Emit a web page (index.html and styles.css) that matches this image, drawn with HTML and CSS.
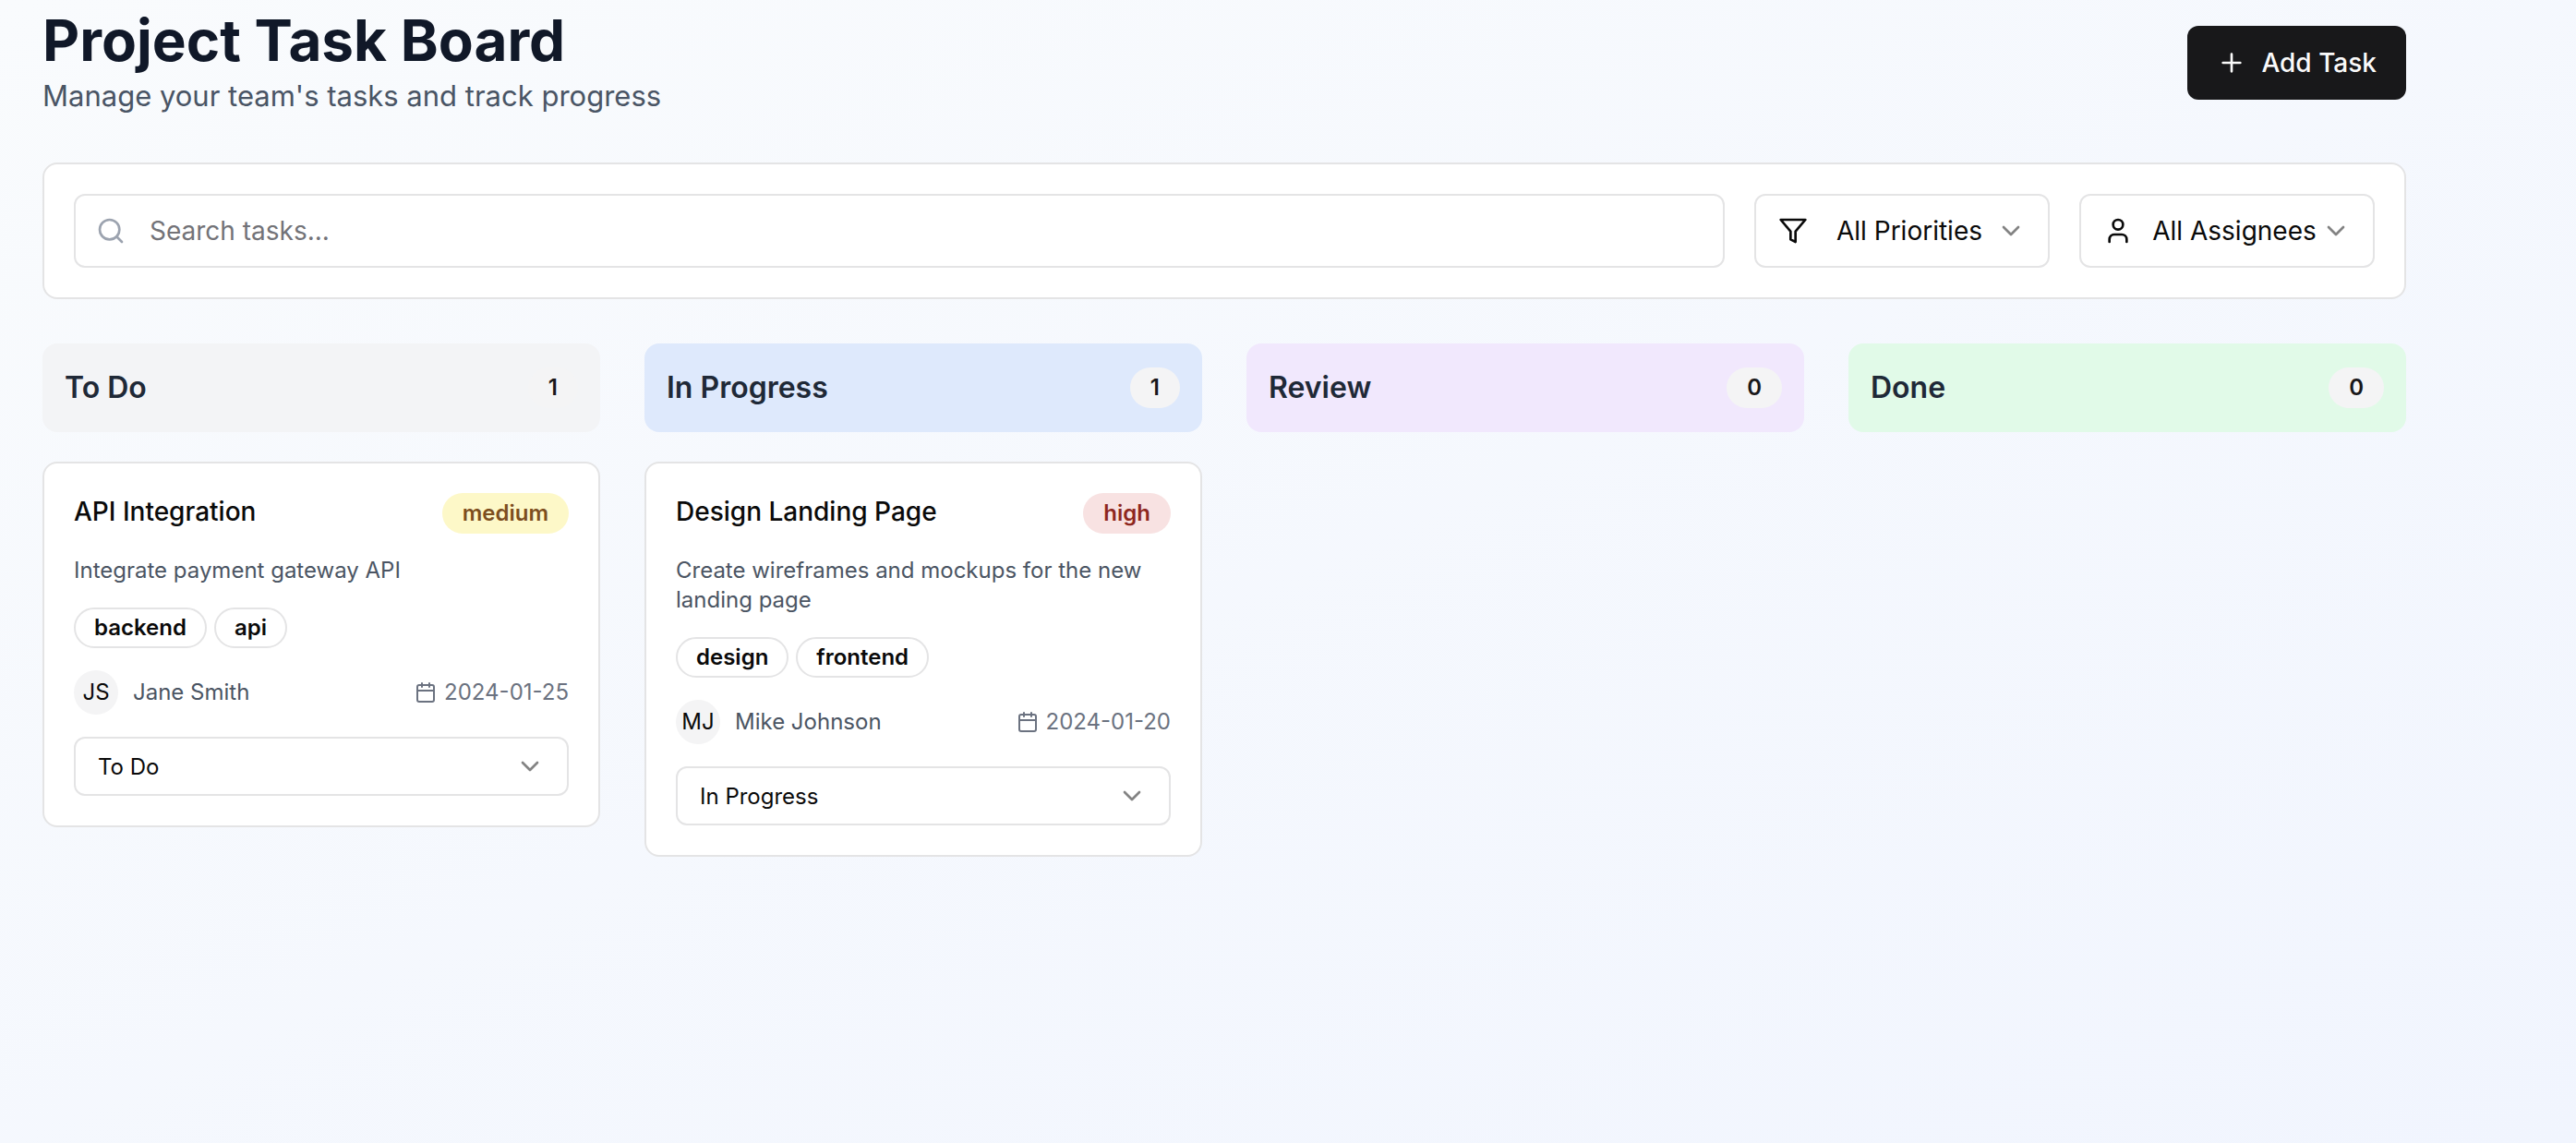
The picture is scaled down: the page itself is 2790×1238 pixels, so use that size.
FILE: index.html
```html
<!DOCTYPE html>
<html lang="en">
  <head>
    <meta charset="UTF-8" />
    <meta name="viewport" content="width=device-width, initial-scale=1.0" />
    <title>Project Task Board</title>
    <link rel="stylesheet" href="styles.css">
  </head>
  <body>
    <div class="container">
      <header class="page-header">
        <div>
          <h1>Project Task Board</h1>
          <p class="subtitle">Manage your team's tasks and track progress</p>
        </div>
        <button class="add-btn" type="button">
          <svg class="icon" viewBox="0 0 24 24"><path d="M5 12h14M12 5v14" /></svg>
          Add Task
        </button>
      </header>

      <div class="filters">
        <label class="search">
          <svg class="icon" viewBox="0 0 24 24"><circle cx="11" cy="11" r="8" /><path d="m21 21-4.3-4.3" /></svg>
          <input type="text" aria-label="Search tasks" placeholder="Search tasks..." />
        </label>
        <label class="filter">
          <svg class="icon" viewBox="0 0 24 24"><path d="M22 3H2l8 9.46V19l4 2v-8.54L22 3z" /></svg>
          <select aria-label="Priority">
            <option>All Priorities</option>
            <option>High</option>
            <option>Medium</option>
            <option>Low</option>
          </select>
          <svg class="icon chevron" viewBox="0 0 24 24"><path d="m6 9 6 6 6-6" /></svg>
        </label>
        <label class="filter">
          <svg class="icon" viewBox="0 0 24 24"><path d="M19 21v-2a4 4 0 0 0-4-4H9a4 4 0 0 0-4 4v2" /><circle cx="12" cy="7" r="4" /></svg>
          <select aria-label="Assignee">
            <option>All Assignees</option>
            <option>Jane Smith</option>
            <option>Mike Johnson</option>
          </select>
          <svg class="icon chevron" viewBox="0 0 24 24"><path d="m6 9 6 6 6-6" /></svg>
        </label>
      </div>

      <main class="board">
        <section class="column">
          <div class="column-header todo">
            <h2>To Do</h2>
            <span class="badge count">1</span>
          </div>
          <article class="card">
            <div class="card-top">
              <h3>API Integration</h3>
              <span class="badge medium">medium</span>
            </div>
            <p class="description">Integrate payment gateway API</p>
            <div class="tags">
              <span class="badge tag">backend</span>
              <span class="badge tag">api</span>
            </div>
            <div class="meta">
              <span class="avatar">JS</span>
              <span class="name">Jane Smith</span>
              <svg class="icon small" viewBox="0 0 24 24"><path d="M8 2v4M16 2v4M3 10h18" /><rect x="3" y="4" width="18" height="18" rx="2" /></svg>
              <time datetime="2024-01-25">2024-01-25</time>
            </div>
            <label class="status">
              <select aria-label="Status of API Integration">
                <option selected>To Do</option>
                <option>In Progress</option>
                <option>Review</option>
                <option>Done</option>
              </select>
              <svg class="icon chevron" viewBox="0 0 24 24"><path d="m6 9 6 6 6-6" /></svg>
            </label>
          </article>
        </section>

        <section class="column">
          <div class="column-header progress">
            <h2>In Progress</h2>
            <span class="badge count">1</span>
          </div>
          <article class="card">
            <div class="card-top">
              <h3>Design Landing Page</h3>
              <span class="badge high">high</span>
            </div>
            <p class="description">Create wireframes and mockups for the new landing page</p>
            <div class="tags">
              <span class="badge tag">design</span>
              <span class="badge tag">frontend</span>
            </div>
            <div class="meta">
              <span class="avatar">MJ</span>
              <span class="name">Mike Johnson</span>
              <svg class="icon small" viewBox="0 0 24 24"><path d="M8 2v4M16 2v4M3 10h18" /><rect x="3" y="4" width="18" height="18" rx="2" /></svg>
              <time datetime="2024-01-20">2024-01-20</time>
            </div>
            <label class="status">
              <select aria-label="Status of Design Landing Page">
                <option>To Do</option>
                <option selected>In Progress</option>
                <option>Review</option>
                <option>Done</option>
              </select>
              <svg class="icon chevron" viewBox="0 0 24 24"><path d="m6 9 6 6 6-6" /></svg>
            </label>
          </article>
        </section>

        <section class="column">
          <div class="column-header review">
            <h2>Review</h2>
            <span class="badge count">0</span>
          </div>
        </section>

        <section class="column">
          <div class="column-header done">
            <h2>Done</h2>
            <span class="badge count">0</span>
          </div>
        </section>
      </main>
    </div>
  </body>
</html>
```
FILE: styles.css
```css
* {
  box-sizing: border-box;
}
body {
  font-family: Inter, "Liberation Sans", sans-serif;
  font-size: 28px;
  color: #0a0a0a;
  margin: 0;
  min-height: 100vh;
  background: linear-gradient(to bottom right, #f9fbfd, #f1f5fe);
}
h1, h2, h3, p {
  margin: 0;
}
input, select, button {
  font: inherit;
  color: inherit;
  border: none;
  background: none;
  padding: 0;
  outline: none;
}
select {
  appearance: none;
  field-sizing: content;
  cursor: pointer;
}
.icon {
  width: 32px;
  height: 32px;
  flex: none;
  fill: none;
  stroke: currentColor;
  stroke-width: 2;
  stroke-linecap: round;
  stroke-linejoin: round;
}
.icon.small {
  width: 24px;
  height: 24px;
}
.chevron {
  opacity: 0.5;
}
.container {
  max-width: 2606px;
  padding: 8px 0 48px 46px;
}

/* header */
.page-header {
  display: flex;
  justify-content: space-between;
  align-items: center;
  margin-bottom: 48px;
}
h1 {
  font-size: 62px;
  line-height: 72px;
  font-weight: 700;
  color: #101828;
}
.subtitle {
  font-size: 31px;
  line-height: 48px;
  color: #4a5565;
}
.add-btn {
  display: flex;
  align-items: center;
  gap: 16px;
  height: 80px;
  padding: 0 32px;
  border-radius: 12px;
  background-color: #18181a;
  color: #fafafa;
  font-weight: 500;
  cursor: pointer;
}

/* filters */
.filters {
  display: flex;
  gap: 32px;
  padding: 32px;
  margin-bottom: 48px;
  background-color: white;
  border: 2px solid #e4e4e5;
  border-radius: 16px;
}
.search, .filter {
  display: flex;
  align-items: center;
  height: 80px;
  padding: 0 24px;
  border: 2px solid #e4e4e5;
  border-radius: 12px;
}
.search {
  flex: 1;
  gap: 26px;
  padding: 0 22px;
}
.search .icon {
  color: #9ca3af;
}
.search input {
  flex: 1;
}
.search input::placeholder {
  color: #737378;
  opacity: 1;
}
.filter {
  width: 320px;
  justify-content: space-between;
}
.filter .icon:first-child {
  margin-right: 16px;
}

/* board */
.board {
  display: grid;
  grid-template-columns: repeat(4, 1fr);
  gap: 48px;
}
.column-header {
  display: flex;
  justify-content: space-between;
  align-items: center;
  padding: 24px;
  margin-bottom: 32px;
  border-radius: 16px;
}
.column-header h2 {
  font-size: 32px;
  line-height: 48px;
  font-weight: 600;
  color: #1f2937;
}
.todo {
  background-color: #f3f4f6;
}
.progress {
  background-color: #dee9fc;
}
.review {
  background-color: #f1e8fd;
}
.done {
  background-color: #e1fae8;
}
.badge {
  font-size: 24px;
  line-height: 32px;
  font-weight: 600;
  padding: 4px 20px;
  border: 2px solid transparent;
  border-radius: 22px;
}
.count {
  background-color: #f4f4f5;
  color: #18181a;
}
.medium {
  background-color: #fdf8c8;
  color: #7d4e1e;
}
.high {
  background-color: #f8e2e2;
  color: #8e2720;
}
.tag {
  border-color: #e4e4e5;
}
.card {
  display: flex;
  flex-direction: column;
  gap: 24px;
  padding: 32px;
  background-color: white;
  border: 2px solid #e4e4e5;
  border-radius: 16px;
}
.card-top {
  display: flex;
  justify-content: space-between;
  align-items: flex-start;
}
.card h3 {
  font-size: 28px;
  line-height: 40px;
  font-weight: 500;
}
.description {
  font-size: 24px;
  line-height: 32px;
  color: #4b5563;
}
.tags {
  display: flex;
  gap: 8px;
}
.meta {
  display: flex;
  align-items: center;
  gap: 8px;
  font-size: 24px;
  line-height: 32px;
  color: #6b7280;
}
.avatar {
  display: flex;
  align-items: center;
  justify-content: center;
  width: 48px;
  height: 48px;
  border-radius: 50%;
  background-color: #f4f4f5;
  color: #0a0a0a;
}
.name {
  flex: 1;
  padding-left: 8px;
  color: #4b5563;
}
.status {
  display: flex;
  align-items: center;
  height: 64px;
  padding: 0 24px;
  border: 2px solid #e4e4e5;
  border-radius: 12px;
  font-size: 24px;
}
.status select {
  flex: 1;
}
```
